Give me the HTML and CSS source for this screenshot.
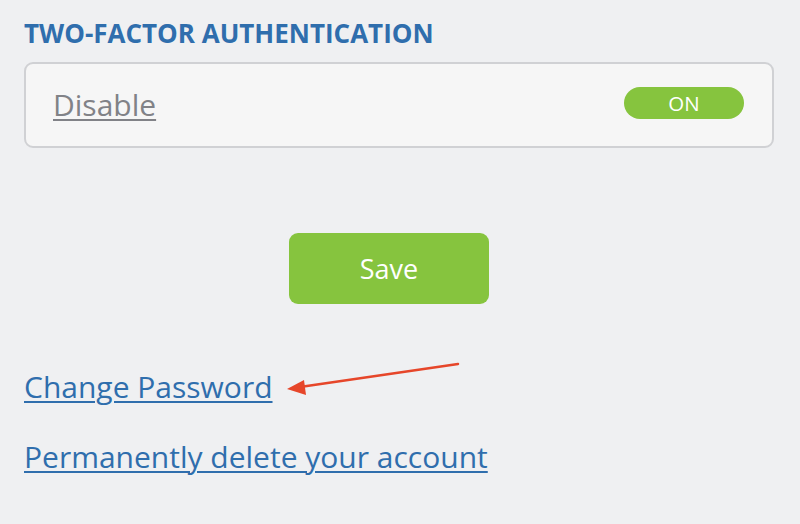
FILE: index.html
```html
<!DOCTYPE html>
<html>
<head>
<meta charset="utf-8">
<link rel="stylesheet" href="styles.css">
</head>
<body>
<div class="page">
  <h2 class="section-title">TWO-FACTOR AUTHENTICATION</h2>
  <div class="tfa-box">
    <a class="disable-link" href="#">Disable</a>
    <span class="toggle-on">ON</span>
  </div>
  <div class="actions">
    <button class="save-btn">Save</button>
  </div>
  <div class="links">
    <a class="account-link" href="#">Change Password</a>
    <a class="account-link" href="#">Permanently delete your account</a>
  </div>
  <svg class="annot-arrow" width="180" height="40" viewBox="0 0 180 40">
    <line x1="172" y1="3" x2="14" y2="26" stroke="#e6462a" stroke-width="2.5" stroke-linecap="round"/>
    <polygon points="1,28 18,19 20,34" fill="#e6462a"/>
  </svg>
</div>
</body>
</html>
```
FILE: styles.css
```css
html, body {
  margin: 0;
  padding: 0;
  background: #eff0f2;
}
body {
  font-family: "Open Sans", "Liberation Sans", sans-serif;
  width: 800px;
  height: 524px;
  overflow: hidden;
}
.page {
  position: relative;
  padding: 0 26px 0 24px;
}
.section-title {
  margin: 0;
  padding-top: 16px;
  font-size: 26px;
  line-height: 34px;
  font-weight: 700;
  color: #2f6ead;
}
.tfa-box {
  margin-top: 12px;
  height: 86px;
  box-sizing: border-box;
  border: 2px solid #d0d1d4;
  border-radius: 9px;
  background: #f6f6f6;
  display: flex;
  align-items: center;
  justify-content: space-between;
  padding: 0 28px 0 27px;
}
.disable-link {
  color: #818287;
  font-size: 30px;
  line-height: 40px;
  text-decoration: underline;
  text-underline-offset: 3px;
  text-decoration-thickness: 2px;
}
.toggle-on {
  width: 120px;
  height: 32px;
  border-radius: 16px;
  background: #86c43e;
  color: #fff;
  font-size: 20.5px;
  line-height: 32px;
  text-align: center;
  margin-top: -4px;
}
.actions {
  display: flex;
  justify-content: center;
  margin-top: 85px;
  padding-right: 20px;
}
.save-btn {
  width: 200px;
  height: 71px;
  border: none;
  border-radius: 9px;
  background: #86c43e;
  color: #fff;
  font-family: inherit;
  font-size: 27px;
  padding: 0;
}
.links {
  display: flex;
  flex-direction: column;
  align-items: flex-start;
  margin-top: 63px;
  gap: 30px;
}
.account-link {
  color: #2f6ead;
  font-size: 30px;
  line-height: 40px;
  text-decoration: underline;
  text-underline-offset: 3px;
  text-decoration-thickness: 2px;
}
.annot-arrow {
  position: absolute;
  left: 286px;
  top: 361px;
}
```
